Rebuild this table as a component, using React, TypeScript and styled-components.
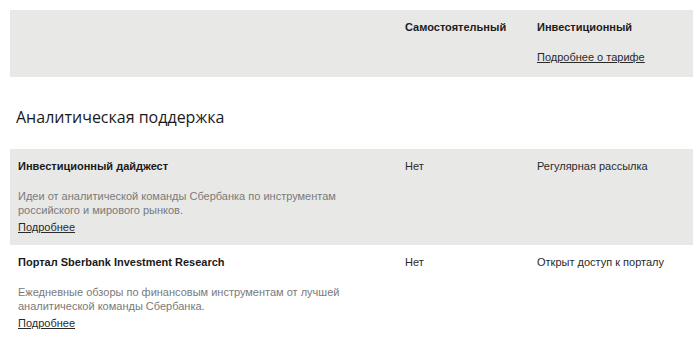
import React from "react";
import styled, { createGlobalStyle } from "styled-components";

const Global = createGlobalStyle`
  html, body { margin: 0; padding: 0; background: #fff; }
  body { font-family: "Liberation Sans", Arial, sans-serif; color: #1a1a1a; }
`;

const Page = styled.div`
  padding: 10px 7px 0 10px;
`;

const Grid = styled.div<{ $shaded?: boolean }>`
  display: grid;
  grid-template-columns: 387px 132px 1fr;
  padding: 0 8px;
  background: ${(p) => (p.$shaded ? "#e8e8e7" : "transparent")};
`;

const HeaderRow = styled(Grid)`
  height: 67px;
  box-sizing: border-box;
  padding-top: 10px;
`;

const HeadTitle = styled.div`
  font-size: 11px;
  line-height: 14px;
  font-weight: bold;
  color: #1c1c1c;
`;

const Stack = styled.div`
  display: flex;
  flex-direction: column;
  gap: 13px;
`;

const Link = styled.a`
  font-size: 11px;
  line-height: 14px;
  color: #2a2a2a;
  text-decoration: underline;
  cursor: pointer;
`;

const SectionTitle = styled.h2`
  margin: 0;
  padding: 28px 6px 20px;
  font-family: "Open Sans", sans-serif;
  font-weight: 400;
  font-size: 16px;
  line-height: 24px;
  color: #1a1a1a;
`;

const Row = styled(Grid)`
  padding-top: 10px;
  padding-bottom: 10px;
`;

const ItemTitle = styled.div`
  font-size: 11px;
  line-height: 14px;
  font-weight: bold;
  color: #1a1a1a;
  margin-bottom: 16px;
`;

const Desc = styled.div`
  font-size: 11px;
  line-height: 14px;
  color: #7a7a7a;
  max-width: 330px;
`;

const Cell = styled.div`
  font-size: 11px;
  line-height: 14px;
  color: #2a2a2a;
`;

const items = [
  {
    title: "Инвестиционный дайджест",
    desc: "Идеи от аналитической команды Сбербанка по инструментам российского и мирового рынков.",
    own: "Нет",
    inv: "Регулярная рассылка",
    shaded: true,
  },
  {
    title: "Портал Sberbank Investment Research",
    desc: "Ежедневные обзоры по финансовым инструментам от лучшей аналитической команды Сбербанка.",
    own: "Нет",
    inv: "Открыт доступ к порталу",
    shaded: false,
  },
];

export default function App() {
  return (
    <Page>
      <Global />
      <HeaderRow $shaded>
        <div />
        <HeadTitle>Самостоятельный</HeadTitle>
        <Stack>
          <HeadTitle>Инвестиционный</HeadTitle>
          <div>
            <Link>Подробнее о тарифе</Link>
          </div>
        </Stack>
      </HeaderRow>
      <SectionTitle>Аналитическая поддержка</SectionTitle>
      {items.map((it) => (
        <Row key={it.title} $shaded={it.shaded}>
          <div>
            <ItemTitle>{it.title}</ItemTitle>
            <Desc>{it.desc}</Desc>
            <Link>Подробнее</Link>
          </div>
          <Cell>{it.own}</Cell>
          <Cell>{it.inv}</Cell>
        </Row>
      ))}
    </Page>
  );
}
